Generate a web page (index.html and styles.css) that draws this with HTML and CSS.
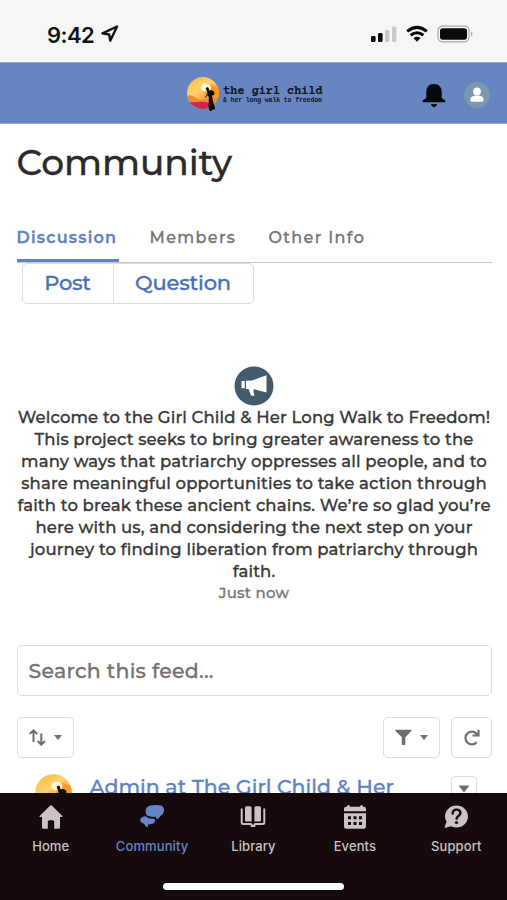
FILE: index.html
```html
<!DOCTYPE html>
<html lang="en">
<head>
<meta charset="utf-8">
<meta name="viewport" content="width=device-width, initial-scale=1">
<title>Community</title>
<link rel="stylesheet" href="styles.css">
</head>
<body>
<div class="phone">
  <header class="status">
    <div class="clock"><span>9:42</span>
      <svg width="18" height="18" viewBox="0 0 18 18"><path d="M1.500 8.400 16 1.500 9.300 15.700 8.200 9.500Z" fill="none" stroke="#101313" stroke-width="2.400" stroke-linejoin="round"/></svg>
    </div>
    <svg class="signals" width="104" height="20" viewBox="0 0 104 20">
      <g fill="#080b0a"><rect x="1" y="11" width="4.600" height="6" rx="1.300"/><rect x="8" y="8" width="4.600" height="9" rx="1.300"/></g>
      <g fill="#c7cac9"><rect x="15" y="5" width="4.400" height="12" rx="1.300"/><rect x="22" y="1.500" width="4.400" height="15.500" rx="1.300"/></g>
      <g fill="none" stroke="#080b0a" stroke-width="3"><path d="M37.200 6.300Q47 -1.500 56.800 6.300"/><path d="M40.700 10.200Q47 5.300 53.300 10.200"/></g>
      <path d="M43.500 13Q47 10.400 50.500 13L47 16.800Z" fill="#080b0a"/>
      <rect x="68" y="1.200" width="31" height="15.600" rx="4.500" fill="none" stroke="#a4a8a7" stroke-width="1.200"/>
      <rect x="70" y="3.200" width="27" height="11.600" rx="2.800" fill="#080b0a"/><path d="M101 6.500Q104 9 101 11.500Z" fill="#a4a8a7"/>
    </svg>
  </header>

  <div class="brandbar">
    <div class="brand">
      <svg class="logo" width="34" height="37" viewBox="0 0 34 37"><use href="#sunset"/></svg>
      <div class="brandname"><div class="name">the girl child</div><div class="tagline">&amp; her long walk to freedom</div></div>
    </div>
    <div class="tools">
      <svg width="24" height="25" viewBox="0 0 24 25"><path d="M12 1C7 1 4.300 4.500 4.300 9v5.500C4.300 16 .6 16.500.6 18.200c0 .7.5 1 1 1h20.800c.5 0 1-.3 1-1 0-1.700-3.700-2.200-3.700-3.700V9C19.700 4.500 17 1 12 1ZM9 21h6Q14.500 24 12 24T9 21Z" fill="#05080d"/></svg>
      <svg width="26" height="26" viewBox="0 0 26 26"><circle cx="13" cy="13" r="13" fill="#7899ae"/><circle cx="13" cy="9.500" r="3.900" fill="#fff"/><path d="M6.500 19v-2.200c0-2.200 3-2.800 4.600-3.400q1.900.8 3.800 0c1.600.6 4.600 1.200 4.600 3.400V19q-.2.700-1 .7h-11q-.8 0-1-.7Z" fill="#fff"/></svg>
    </div>
  </div>

  <main>
    <h1>Community</h1>
    <nav class="tabs"><a class="tab active">Discussion</a><a class="tab members">Members</a><a class="tab other">Other Info</a></nav>
    <div class="publisher"><button class="post">Post</button><button class="question">Question</button></div>

    <section class="welcome">
      <svg width="40" height="40" viewBox="0 0 40 40"><circle cx="20" cy="20" r="19.500" fill="#435b6c"/><path d="M7.500 15h3.300v7.200H7.500ZM12 14.800l6-.4 14.500-5.200v17.400L19.500 23l1.200 5.800q.1 1-.7 1h-2.200q-.8 0-1-.8L14.600 23H12Z" fill="#fff"/><path d="M18.700 24l3.300 4.200-1.200 1.200Z" fill="#435b6c"/></svg>
      <p class="message">
        <span>Welcome to the Girl Child &amp; Her Long Walk to Freedom!</span>
        <span>This project seeks to bring greater awareness to the</span>
        <span>many ways that patriarchy oppresses all people, and to</span>
        <span>share meaningful opportunities to take action through</span>
        <span>faith to break these ancient chains. We’re so glad you’re</span>
        <span>here with us, and considering the next step on your</span>
        <span>journey to finding liberation from patriarchy through</span>
        <span>faith.</span>
      </p>
      <div class="time">Just now</div>
    </section>

    <div class="search"><span>Search this feed...</span></div>
    <div class="controls">
      <button class="control">
        <svg width="17" height="17" viewBox="0 0 17 17" fill="none" stroke="#706e6b" stroke-width="2"><path d="M4.500 13V1.500M.8 5 4.500 1.400 8.200 5M12.300 4.500v11.200M8.600 12l3.700 3.700L16 12"/></svg>
        <svg class="caret" width="8" height="5" viewBox="0 0 8 5"><path d="M0 0h8L4 5Z" fill="#706e6b"/></svg>
      </button>
      <button class="control filter">
        <svg width="17" height="17" viewBox="0 0 17 17"><path d="M.8.700h15.400q.8.500.2 1.200L10.300 8.300v7q0 .7-.7.700H7.500q-.7 0-.7-.7v-7L.5 1.900Q0 1.200.8.700Z" fill="#706e6b"/></svg>
        <svg class="caret" width="8" height="5" viewBox="0 0 8 5"><path d="M0 0h8L4 5Z" fill="#706e6b"/></svg>
      </button>
      <button class="control refresh"><svg width="17" height="17" viewBox="0 0 17 17" fill="none" stroke="#706e6b" stroke-width="2.200"><path d="M13.700 13.200A6.400 6.400 0 1 1 14 5.200L14.500 6M9.500 6.500h6V.8"/></svg></button>
    </div>
    <article class="feed">
      <svg class="avatar" width="39" height="42" viewBox="0 0 34 37"><use href="#sunset"/></svg>
      <span class="author">Admin at The Girl Child &amp; Her</span>
      <button class="more"><svg width="12" height="8" viewBox="0 0 12 8"><path d="M.5.500h11L6 7.500Z" fill="#706e6b"/></svg></button>
    </article>
  </main>

  <footer>
    <nav class="bottom">
      <a><svg width="26" height="26" viewBox="0 0 26 26"><path d="M13 1.300q.6 0 1 .4L24.300 11.900q.8 1-.3 1H22v10.300q0 1.500-1.500 1.500h-4.300v-7q0-1.500-1.500-1.500h-3.400q-1.500 0-1.500 1.500v7H5.500Q4 24.700 4 23.200V12.900H2q-1.100 0-.3-1L12 1.700q.4-.4 1-.4Z"/></svg><span>Home</span></a>
      <a class="current"><svg width="26" height="26" viewBox="0 0 26 26"><path d="M11 1.500Q17 .3 22 1.500q3 1 3 4.500 0 4.500-3.800 6-1.200 3-3.700 3.500.2-1.500-1-2.700-5 .4-8-1-2-1.200-2-4.300 0-4.500 4.500-6Z"/><path d="M5 12.500Q7 11.600 9 14q2.500 1 6.500.7 1.500 3.300-1.300 4.900-2.200.9-5.200.8-.5 1.800.2 3.400-3-.9-4-4Q1.200 18.800 1.200 16q0-2.500 3.800-3.500Z"/></svg><span>Community</span></a>
      <a><svg width="26" height="26" viewBox="0 0 26 26"><path d="M6.500 2.200H10q1.600 0 1.600 1.600v13.700H6.300q-1.300 0-1.300-1.300V3.700q0-1.500 1.500-1.500ZM16 2.200h3.500q1.500 0 1.500 1.500v12.500q0 1.300-1.300 1.300h-5.300V3.800q0-1.600 1.600-1.600Z"/><path d="M1.700 4.500v14q0 1.500 1.700 1.500h7q1.300 0 1.300 1.300v.6h2.600v-.6q0-1.300 1.300-1.300h7q1.700 0 1.700-1.500v-14" fill="none" stroke="#cac2c4" stroke-width="2"/></svg><span>Library</span></a>
      <a><svg width="26" height="26" viewBox="0 0 26 26"><path d="M5 2.800V2.500q0-1.500 1.500-1.500T8 2.500v.3h10v-.3Q18 1 19.500 1T21 2.500v.3h.8Q24 2.800 24 5v2.200H2V5q0-2.200 2.200-2.200ZM2 9.200h22v13.300q0 2.200-2.200 2.200H4.200Q2 24.700 2 22.500Z"/><g fill="#170a0c"><path d="M6 12.300h3v3H6ZM11.500 12.300h3v3h-3ZM17 12.300h3v3h-3ZM6 18h3v3H6ZM11.500 18h3v3h-3ZM17 18h3v3h-3Z"/></g></svg><span>Events</span></a>
      <a><svg width="26" height="26" viewBox="0 0 26 26"><path d="M13.500 1.500c6.300 0 11.500 4.900 11.500 11s-5.200 11-11.500 11q-3 0-5.500-1.300l-5.700 1.600q-1 .1-.7-.8l2-5.300Q2 15.500 2 12.500c0-6.100 5.200-11 11.500-11Z"/><path d="M9.700 9.600q0-4 3.900-4 3.800 0 3.800 3.400c0 3-3.800 3-3.800 5.800" fill="none" stroke="#170a0c" stroke-width="2.400" stroke-linecap="round"/><circle cx="13.500" cy="18.600" r="1.600" fill="#170a0c"/></svg><span>Support</span></a>
    </nav>
    <div class="homebar"></div>
  </footer>
</div>
<svg class="defs" width="0" height="0">
  <defs>
    <linearGradient id="sky" x1="0" x2=".7" y1="0" y2="1"><stop stop-color="#f3b833"/><stop offset=".45" stop-color="#ffd271"/><stop offset="1" stop-color="#ec6b28"/></linearGradient>
    <clipPath id="disc"><circle cx="17" cy="17" r="16"/></clipPath>
    <symbol id="sunset" viewBox="0 0 34 37">
      <g clip-path="url(#disc)"><path d="M0 0h34v34H0Z" fill="url(#sky)"/><path d="M20 7 34 12v11L19 18Z" fill="#f79a1f"/><ellipse cx="20" cy="11.500" rx="5" ry="4" fill="#fff8d8"/><path d="M1 20q5-2 9 2 5 3 13 0l11 2v10H0Z" fill="#ed8b35"/><path d="M0 25q6 2 11 1 8-1 12 1l5 7H8Z" fill="#ce2559"/></g>
      <path d="M19.800 12.500q.3-1.600 1.700-1.300 1.600.2 1.400 2.100l.4 1.200 2.500-.3 2.300 1.200.4 3-2.500 1.300.8 4.700q.9 4 2.300 7l-.5 2-2.500.3-.5 1.300-2.200-.2-.9-4 .4-9.300-1.200-2.500-2.200 3-.2-1 2.300-4Z" fill="#100a08"/>
    </symbol>
  </defs>
</svg>
</body>
</html>
```

FILE: styles.css
```css
* { box-sizing: border-box; }
body { margin: 0; background: #fff; font-family: Montserrat, Inter, sans-serif; font-weight: 500; overflow: hidden; }
button { font: inherit; background: #fff; border: 1px solid #dddbda; margin: 0; padding: 0; }
svg { display: block; flex: none; }
.defs { position: absolute; }
.phone { width: 507px; height: 900px; display: flex; flex-direction: column; overflow: hidden; }
.status { height: 62px; flex: none; background: #f5f7f7; display: flex; justify-content: space-between; padding: 25px 33px 0 47px; }
.clock { display: flex; gap: 7px; font: 600 22px/20px Inter, sans-serif; letter-spacing: -.6px; color: #101313; }
.brandbar { height: 62px; flex: none; background: #6786c1; display: flex; justify-content: space-between; border-top: 1px solid #90a8d0; border-bottom: 1px solid #90a8d0; padding: 13px 17px 0 186px; }
.brand { display: flex; gap: 3px; }
.brandname { padding-top: 9px; color: #101727; font-family: "Liberation Mono", monospace; font-weight: 700; white-space: nowrap; }
.name { font-family: "Courier Prime", "Liberation Mono", monospace; font-size: 12.500px; line-height: 12px; letter-spacing: -.4px; }
.tagline { font-size: 6.500px; line-height: 7px; letter-spacing: -.1px; }
.tools { display: flex; align-items: center; gap: 18px; height: 38px; }
main { flex: 1; min-height: 0; overflow: hidden; padding: 0 15.500px 0 16.500px; }
h1 { margin: 13px 0 0; font-size: 36px; line-height: 50px; font-weight: 500; color: #2b2b2b; letter-spacing: -.1px; height: 50px; -webkit-text-stroke: .3px; }
.tabs { display: flex; height: 76px; border-bottom: 1px solid #c9c9c9; }
.tab { height: 75px; padding-top: 39px; font-size: 16px; line-height: 24px; letter-spacing: 1.350px; color: #747474; white-space: nowrap; -webkit-text-stroke: .3px; }
.active { width: 102px; color: #5f82c5; font-weight: 600; letter-spacing: 1.200px; border-bottom: 3px solid #5f82c5; }
.members { margin-left: 31px; width: 119px; }
.publisher { display: flex; margin-left: 5px; height: 41px; color: #4870b9; font-size: 21px; line-height: 36px; letter-spacing: -.2px; -webkit-text-stroke: .3px; }
.publisher button { color: inherit; letter-spacing: inherit; padding-bottom: 2px; }
.post { width: 92px; border-radius: 5px 0 0 5px; }
.question { width: 141px; margin-left: -1px; border-radius: 0 5px 5px 0; }
.welcome { margin-top: 62px; display: flex; flex-direction: column; align-items: center; }
.message { margin: 0; font-size: 16.500px; line-height: 22px; color: #383838; text-align: center; white-space: nowrap; letter-spacing: .13px; -webkit-text-stroke: .3px; }
.message span { display: block; }
.time { font-size: 15px; line-height: 22px; color: #777; letter-spacing: .25px; -webkit-text-stroke: .3px; }
.search { margin-top: 41px; height: 51px; border: 1px solid #dddbda; border-radius: 5px; padding-left: 11px; color: #747270; font-size: 20.500px; line-height: 49px; letter-spacing: .25px; -webkit-text-stroke: .3px; }
.controls { display: flex; margin-top: 21px; }
.control { height: 41px; width: 57px; border-radius: 5px; display: flex; align-items: center; justify-content: center; gap: 8px; }
.filter { margin-left: auto; }
.refresh { width: 41px; margin-left: 11px; }
.feed { display: flex; margin-top: 15px; padding-left: 17px; align-items: flex-start; }
.author { margin-left: 17px; color: #5f82c5; font-size: 20.500px; line-height: 28px; white-space: nowrap; letter-spacing: .02px; -webkit-text-stroke: .3px; }
.more { width: 26px; height: 26px; border-radius: 4px; margin: 3px 15px 0 auto; display: flex; align-items: center; justify-content: center; }
footer { height: 107px; flex: none; background: #170a0c; }
.bottom { height: 90px; display: grid; grid-template-columns: repeat(5, 1fr); padding-top: 11px; }
.bottom a { display: flex; flex-direction: column; align-items: center; color: #cac2c4; font: 500 13px/18px Inter, sans-serif; letter-spacing: .1px; }
.bottom svg { fill: currentColor; }
.bottom span { margin-top: 7px; }
.bottom .current { color: #6685c4; }
.homebar { width: 181px; height: 7px; border-radius: 4px; background: #fff; margin: 0 auto; }
```
